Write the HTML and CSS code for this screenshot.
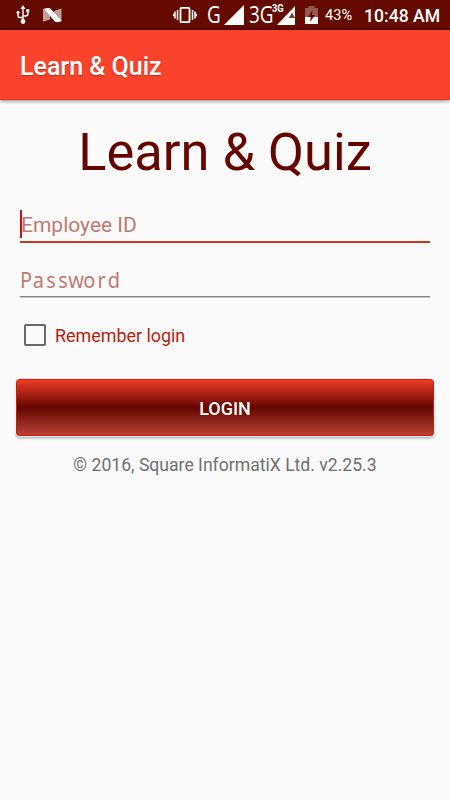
FILE: index.html
```html
<!DOCTYPE html>
<html lang="en">
<head>
<meta charset="utf-8">
<title>Learn &amp; Quiz</title>
<link rel="stylesheet" href="styles.css">
</head>
<body>
<div class="status">
  <svg class="usb" width="14" height="20" viewBox="0 0 14 20" fill="none" stroke="#fff" stroke-width="1.4"><path d="M7 3v13M2 8v2.5q0 2 2 2h3M12 6v2.5q0 2.5-2.5 2.5H7"/><g fill="#fff" stroke="none"><path d="M7 0l2.5 4h-5z"/><circle cx="2" cy="7.5" r="1.5"/><path d="M10.3 4.2h3v3h-3z"/><circle cx="7" cy="16.5" r="2.4"/></g></svg>
  <svg class="nougat" width="19" height="15" viewBox="0 0 19 15"><path fill="#fff" opacity=".6" d="M0 .8L7 2.5v9L0 13.8zM11 3l7.5-2.5v13.3L11 12z"/><path fill="#fff" d="M1 .8Q4-.4 7 .2L18.5 12.5Q16 15 12 13.7z"/></svg>
  <svg class="vibrate" width="24" height="18" viewBox="0 0 24 18" fill="none" stroke="#fff"><rect x="7.5" y="1.8" width="9" height="14.4" rx="1" stroke-width="1.8"/><path stroke-width="1.5" d="M4.5 4v10M19.5 4v10M2 5.5v7M22 5.5v7M.4 7.8v2.4M23.6 7.8v2.4"/></svg>
  <span class="net net-g">G</span>
  <svg class="signal" width="20" height="20" viewBox="0 0 20 20"><path fill="#fff" d="M20 0v20H0z"/></svg>
  <span class="net net-3g">3G</span>
  <span class="mobile"><svg width="18" height="19" viewBox="0 0 18 19"><path fill="#fff" d="M18 0v19H0z"/><path fill="#660a00" opacity=".8" d="M15 6.5l3.2 5.5h-6.4z"/></svg><b>3G</b></span>
  <svg class="battery" width="13" height="18" viewBox="0 0 13 18"><path fill="#fff" opacity=".32" d="M3.5 0h6v2H13v9H0V2h3.5z"/><path fill="#fff" d="M0 11h13v7H0z"/><path fill="#660a00" d="M7.5 4L3 11h2.8L5 16l5-7H7z"/></svg>
  <span class="percent">43%</span>
  <span class="clock">10:48 AM</span>
</div>
<header class="bar"><span>Learn &amp; Quiz</span></header>
<main class="content">
  <h1><span>Learn &amp; Quiz</span></h1>
  <div class="field focused"><i class="caret"></i><span class="hint">Employee ID</span></div>
  <div class="field"><span class="hint mono">P<span class="k3">a</span><span class="k4">s</span><span class="k1">s</span><span class="k0">w</span><span class="k3">or</span>d</span></div>
  <label class="remember"><i class="box"></i><span>Remember login</span></label>
  <button class="login">LOGIN</button>
  <p class="copy">© 2016, Square InformatiX Ltd. v2.25.3</p>
</main>
</body>
</html>
```
FILE: styles.css
```css
* { box-sizing: border-box; }
body { margin: 0; width: 450px; height: 800px; overflow: hidden; background: #fafafa; font-family: Roboto, sans-serif; }
.status { display: flex; height: 30px; background: #640a00; color: #fff; border-bottom: 1px solid #4d0500; align-items: flex-start; white-space: nowrap; }
.status svg { flex: none; display: block; }
.usb { margin: 5px 0 0 16px; }
.nougat { margin: 8px 0 0 13px; }
.vibrate { margin: 6px 0 0 111px; }
.net { font: 23px/29px "Open Sans", sans-serif; flex: none; }
.net-g { width: 18px; margin: 0 -4px 0 10px; transform: scaleX(.82); transform-origin: left; }
.signal { margin: 5px 0 0 3px; }
.net-3g { width: 32px; margin: 0 -8px 0 5px; transform: scaleX(.82); transform-origin: left; }
.mobile { position: relative; margin: 6px 0 0 4px; width: 18px; }
.mobile b { position: absolute; left: -5px; top: -3px; font: bold 11px/12px Roboto, sans-serif; transform: scaleX(.85); transform-origin: left; }
.battery { margin: 6px 0 0 10px; }
.percent { width: 28px; margin-left: 7px; font-size: 14.6px; line-height: 31px; }
.clock { margin-left: 11px; font-size: 17.6px; line-height: 32px; font-weight: 500; }
.bar { display: flex; align-items: center; height: 70px; padding: 3px 20px 0; background: #fa432c; color: #fff; font-size: 25px; font-weight: 500; border-bottom: 1px solid #ee301b; box-shadow: 0 1px 4px rgba(0,0,0,.45); text-shadow: 0 1px 1px rgba(80,0,0,.35); }
.content { display: flex; flex-direction: column; padding: 22px 16px 0; }
h1 { margin: 0; height: 60px; font-size: 52.4px; line-height: 61px; font-weight: 400; color: #640500; text-align: center; white-space: nowrap; }
.field { position: relative; display: flex; height: 54px; margin: 0 4px; border-bottom: 1px solid #858585; box-shadow: 0 1px 0 #c4c4c4; padding-top: 24px; }
.field.focused { height: 61px; border-bottom: 2px solid #c93a1c; box-shadow: none; padding-top: 30px; }
.hint { font-size: 21px; line-height: 27px; color: #bd7b73; white-space: nowrap; }
.focused .hint { margin-left: 1px; }
.mono { font-family: "Noto Sans", sans-serif; letter-spacing: .8px; transform: scaleX(.95); transform-origin: left; }
.k0 { letter-spacing: -.8px; }
.k1 { letter-spacing: .4px; }
.k3 { letter-spacing: 2.2px; }
.k4 { letter-spacing: 2.8px; }
.caret { position: absolute; left: 0; top: 28px; width: 2px; height: 28px; background: #c31010; }
.remember { display: flex; align-items: center; height: 30px; margin: 23px 0 0 8px; gap: 9px; font-size: 17.9px; color: #b91c0e; }
.remember span { padding-top: 1px; }
.box { width: 22px; height: 22px; border: 2px solid #686868; border-radius: 2px; }
.login { height: 57px; margin-top: 29px; border: 1px solid #cb1a08; border-top-color: #f60b00; border-radius: 4px; background: linear-gradient(#ed3d27, #640500 50%, #b64336); box-shadow: 0 0 0 1px #f2f2f2, 0 2px 3px rgba(0,0,0,.36); color: #fff; font: 500 18px Roboto, sans-serif; padding: 1px 0 0; }
.copy { margin: 17px 0 0; font-size: 17.6px; line-height: 25px; color: #707070; text-align: center; white-space: nowrap; }
```
